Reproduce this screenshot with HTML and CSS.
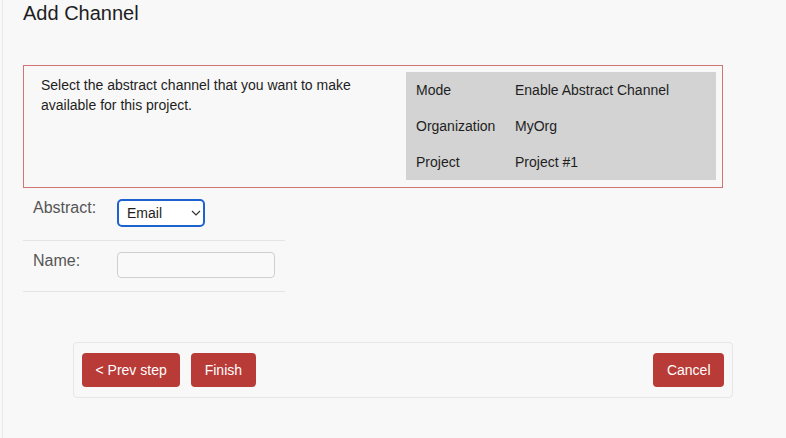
FILE: index.html
```html
<!DOCTYPE html>
<html>
<head>
<meta charset="utf-8">
<link rel="stylesheet" href="styles.css">
</head>
<body>
<div class="page">
  <h1 class="title">Add Channel</h1>
  <div class="info-box">
    <div class="info-text">Select the abstract channel that you want to make available for this project.</div>
    <table class="summary">
      <tr><td class="k">Mode</td><td>Enable Abstract Channel</td></tr>
      <tr><td class="k">Organization</td><td>MyOrg</td></tr>
      <tr><td class="k">Project</td><td>Project #1</td></tr>
    </table>
  </div>
  <div class="form">
    <div class="form-row">
      <label class="lbl">Abstract:</label>
      <div class="select-wrap">
        <select class="select"><option>Email</option></select>
        <svg class="chev" width="10" height="6" viewBox="0 0 10 6"><path d="M1 1l4 4 4-4" fill="none" stroke="#333" stroke-width="1.2"/></svg>
      </div>
    </div>
    <div class="form-row">
      <label class="lbl">Name:</label>
      <input class="input" type="text">
    </div>
  </div>
  <div class="footer">
    <div class="left-btns">
      <button class="btn">&lt; Prev step</button>
      <button class="btn">Finish</button>
    </div>
    <button class="btn">Cancel</button>
  </div>
</div>
</body>
</html>
```
FILE: styles.css
```css
html, body {
  margin: 0;
  padding: 0;
  background: #f8f8f8;
  font-family: "Liberation Sans", Arial, sans-serif;
  color: #1e1e1e;
}
body {
  padding-left: 2px;
  height: 438px;
  box-sizing: border-box;
}
.page {
  border-left: 1px solid #e9e9e9;
  height: 100%;
  padding-left: 20px;
  box-sizing: border-box;
}
.title {
  margin: 0;
  padding-top: 2px;
  font-size: 20px;
  font-weight: normal;
  line-height: 23px;
  color: #1e1e1e;
}
.info-box {
  margin-top: 40px;
  width: 700px;
  box-sizing: border-box;
  border: 1px solid #d27472;
  padding: 6px 6px 7px 6px;
  display: flex;
  align-items: flex-start;
}
.info-text {
  width: 376px;
  flex: none;
  box-sizing: border-box;
  padding: 4px 40px 0 11px;
  font-size: 14px;
  line-height: 19.5px;
  color: #1e1e1e;
}
.summary {
  width: 310px;
  background: #d3d3d3;
  border-collapse: collapse;
  font-size: 14px;
  color: #1e1e1e;
}
.summary td {
  height: 36px;
  padding: 0;
  vertical-align: middle;
}
.summary td.k {
  width: 99px;
  padding-left: 10px;
}
.form {
  width: 262px;
}
.form-row {
  display: flex;
  align-items: flex-start;
  padding: 10px 0 13px 0;
  border-bottom: 1px solid #e4e4e4;
}
.lbl {
  flex: none;
  width: 94px;
  padding-left: 10px;
  box-sizing: border-box;
  font-size: 16px;
  line-height: 18px;
  color: #555;
  margin-top: 1px;
}
.select-wrap {
  position: relative;
  flex: none;
  width: 88px;
  height: 28px;
  margin-top: 1px;
}
.select {
  appearance: none;
  -webkit-appearance: none;
  width: 88px;
  height: 28px;
  box-sizing: border-box;
  border: 2px solid #1c63cf;
  border-radius: 5px;
  background: #fff;
  padding: 0 0 0 8px;
  font-family: "Liberation Sans", Arial, sans-serif;
  font-size: 14px;
  color: #1e1e1e;
  outline: none;
}
.chev {
  position: absolute;
  right: 4px;
  top: 11px;
}
.input {
  flex: none;
  width: 158px;
  height: 26px;
  box-sizing: border-box;
  border: 1px solid #cfcfcf;
  border-radius: 4px;
  background: #f9f9f9;
  margin: 1px 0 0 0;
  padding: 0;
}
.footer {
  margin-top: 50px;
  margin-left: 50px;
  width: 660px;
  box-sizing: border-box;
  border: 1px solid #e6e6e6;
  border-radius: 4px;
  padding: 10px 8px;
  display: flex;
  justify-content: space-between;
}
.left-btns {
  display: flex;
  gap: 11px;
}
.btn {
  height: 34px;
  padding: 0 13.5px;
  border: none;
  border-radius: 4px;
  background: #b83b37;
  color: #fff;
  font-family: "Liberation Sans", Arial, sans-serif;
  font-size: 14px;
  cursor: pointer;
}
```
